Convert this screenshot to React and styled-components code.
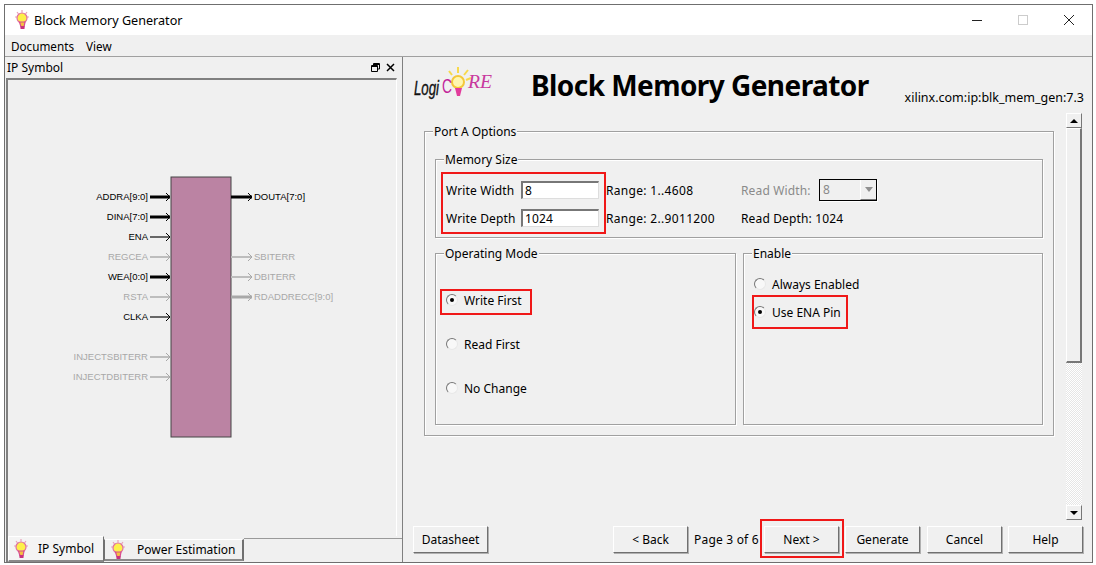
import React from 'react';
import styled, { createGlobalStyle } from 'styled-components';

const Global = createGlobalStyle`
  html, body { margin: 0; padding: 0; background: #fff; }
  body { font-family: "Noto Sans", "DejaVu Sans", sans-serif; font-size: 12px; color: #000; }
`;

const Win = styled.div`
  box-sizing: border-box;
  width: 1089px;
  height: 559px;
  margin: 4px 0 0 4px;
  border: 1px solid #6f6f6f;
  background: #f0f0f0;
  display: flex;
  flex-direction: column;
`;

const TitleBar = styled.div`
  height: 30px;
  background: #fff;
  display: flex;
  align-items: center;
  padding-left: 9px;
  font-size: 12.6px;
`;

const TitleText = styled.span`
  margin-left: 4px;
  flex: 1;
`;

const WinBtn = styled.div`
  width: 46px;
  height: 30px;
  display: flex;
  align-items: center;
  justify-content: center;
`;

const MenuBar = styled.div`
  height: 21px;
  border-bottom: 1px solid #a0a0a0;
  display: flex;
  align-items: center;
  gap: 12px;
  padding-left: 6px;
  font-size: 11.7px;
`;

const Body = styled.div`
  flex: 1;
  display: flex;
  min-height: 0;
`;

const LeftPane = styled.div`
  box-sizing: border-box;
  width: 398px;
  border-right: 1px solid #808080;
  display: flex;
  flex-direction: column;
`;

const PaneHead = styled.div`
  height: 21px;
  display: flex;
  align-items: center;
  padding: 0 7px 0 2px;
  gap: 6px;
`;

const PaneTitle = styled.span`
  flex: 1;
`;

const Canvas = styled.div`
  box-sizing: border-box;
  flex: 1;
  width: 391px;
  margin-left: 1px;
  border-top: 2px solid #808080;
  border-left: 2px solid #808080;
  border-right: 1px solid #fff;
  min-height: 0;
`;

const CanvasSvg = styled.svg`
  display: block;
  width: 389px;
  height: 455px;
`;

const TabStrip = styled.div`
  height: 26px;
  margin-left: 1px;
  display: flex;
  align-items: flex-start;
  border-left: 2px solid #808080;
`;

const Tab = styled.div`
  box-sizing: border-box;
  display: flex;
  align-items: center;
  width: ${(p) => p.$w}px;
  height: ${(p) => (p.$active ? 26 : 22)}px;
  margin-top: ${(p) => (p.$active ? 0 : 3)}px;
  padding-left: ${(p) => (p.$active ? 4 : 5)}px;
  gap: ${(p) => (p.$active ? 9 : 11)}px;
  background: ${(p) => (p.$active ? '#f4f4f4' : '#f0f0f0')};
  border-top: 1px solid #fff;
  border-left: 1px solid ${(p) => (p.$active ? '#fff' : '#707070')};
  border-right: ${(p) => (p.$active ? 1 : 2)}px solid #707070;
  border-bottom: 2px solid #8a8a8a;
`;

const TabRest = styled.div`
  flex: 1;
  margin-top: 2px;
  border-top: 1px solid #9a9a9a;
`;

const RightPane = styled.div`
  flex: 1;
  display: flex;
  flex-direction: column;
  min-width: 0;
`;

const Header = styled.div`
  height: 55px;
  display: flex;
  padding-left: 9px;
`;

const Logo = styled.svg`
  width: 84px;
  height: 38px;
  margin-top: 9px;
`;

const Heading = styled.h1`
  margin: 9px 0 0 35px;
  font: 700 28px/38px "Noto Sans", "DejaVu Sans", sans-serif;
  letter-spacing: -0.56px;
  white-space: nowrap;
`;

const Vlnv = styled.div`
  margin: 32px 0 0 auto;
  padding-right: 8px;
  font-size: 12.5px;
  line-height: 18px;
  white-space: nowrap;
`;

const Middle = styled.div`
  flex: 1;
  display: flex;
  min-height: 0;
  padding-left: 21px;
`;

const Group = styled.div`
  box-sizing: border-box;
  position: relative;
  width: ${(p) => p.$w}px;
  height: ${(p) => p.$h}px;
  border: 1px solid #a0a0a0;
  box-shadow: 1px 1px 0 #fff, inset 1px 1px 0 #fff;
`;

const Legend = styled.span`
  position: absolute;
  top: -8px;
  left: 8px;
  padding: 0 1px;
  line-height: 16px;
  background: #f0f0f0;
`;

const PortGroup = styled(Group)`
  margin-top: 19px;
  padding: 27px 10px 0;
  display: flex;
  flex-direction: column;
  gap: 15px;
`;

const SizeGroup = styled(Group)`
  display: flex;
  align-items: flex-start;
  padding: 12px 0 0 5px;
`;

const ModeRow = styled.div`
  display: flex;
  gap: 7px;
`;

const RedFrame = styled.div`
  box-sizing: border-box;
  border: 2px solid #f01818;
`;

const SizeFrame = styled(RedFrame)`
  width: 165px;
  height: 62px;
  padding: 7px 0 0 3px;
  display: flex;
  flex-direction: column;
  gap: 10px;
`;

const Field = styled.div`
  display: flex;
  align-items: center;
  height: 18px;
  white-space: nowrap;
  letter-spacing: ${(p) => p.$track || 0.15}px;
`;

const FieldLabel = styled.span`
  width: ${(p) => p.$w}px;
  color: ${(p) => (p.$off ? '#8a8a8a' : '#000')};
`;

const TextInput = styled.div`
  box-sizing: border-box;
  width: 78px;
  height: 18px;
  padding-left: 2px;
  line-height: 16px;
  background: #fff;
  border-top: 2px solid #777;
  border-left: 2px solid #777;
  border-right: 1px solid #ddd;
  border-bottom: 1px solid #ddd;
`;

const SizeColumn = styled.div`
  width: ${(p) => p.$w}px;
  padding-top: 9px;
  display: flex;
  flex-direction: column;
  gap: 10px;
`;

const Combo = styled.div`
  box-sizing: border-box;
  width: 58px;
  height: 22px;
  flex: none;
  display: flex;
  justify-content: space-between;
  color: #8a8a8a;
  line-height: 19px;
  padding-left: 3px;
  border: 1px solid #000;
  box-shadow: 1px 1px 0 #fff;
`;

const ComboArrow = styled.div`
  box-sizing: border-box;
  width: 16px;
  border-left: 1px solid #fff;
  border-bottom: 1px solid #777;
  display: flex;
  align-items: center;
  justify-content: center;
  &::after {
    content: '';
    border: 4px solid transparent;
    border-top: 5px solid #909090;
    border-bottom: 0;
  }
`;

const RadioList = styled.div`
  display: flex;
  flex-direction: column;
  align-items: flex-start;
  gap: ${(p) => p.$gap}px;
  padding: ${(p) => p.$top}px 0 0 ${(p) => p.$left}px;
`;

const RadioRow = styled.div`
  box-sizing: border-box;
  height: ${(p) => p.$h}px;
  width: ${(p) => p.$w}px;
  display: flex;
  align-items: center;
  gap: 6px;
  padding: 0 0 ${(p) => p.$lift || 0}px ${(p) => p.$pad}px;
  border: 2px solid ${(p) => (p.$marked ? '#f01818' : 'transparent')};
  white-space: nowrap;
`;

const RadioDot = styled.span`
  box-sizing: border-box;
  width: 12px;
  height: 12px;
  flex: none;
  border-radius: 50%;
  background: #f8f8f8;
  border: 1px solid;
  border-color: #777 #e8e8e8 #e8e8e8 #777;
  display: flex;
  align-items: center;
  justify-content: center;
  &::after {
    content: '';
    width: 4px;
    height: 4px;
    border-radius: 50%;
    background: ${(p) => (p.$on ? '#000' : 'transparent')};
  }
`;

const ScrollBar = styled.div`
  width: 16px;
  height: 407px;
  margin: 1px 0 0 12px;
  display: flex;
  flex-direction: column;
`;

const ScrollBtn = styled.div`
  box-sizing: border-box;
  height: 15px;
  flex: none;
  background: #f0f0f0;
  border: 1px solid;
  border-color: #fff #777 #777 #fff;
  display: flex;
  align-items: center;
  justify-content: center;
  &::after {
    content: '';
    border: 4px solid transparent;
    ${(p) => (p.$up ? 'border-bottom: 4px solid #000; border-top: 0;' : 'border-top: 4px solid #000; border-bottom: 0;')}
  }
`;

const ScrollThumb = styled.div`
  box-sizing: border-box;
  height: 235px;
  flex: none;
  border-style: solid;
  border-width: 1px 2px 2px 1px;
  border-color: #fff #777 #777 #fff;
`;

const ScrollTrack = styled.div`
  flex: 1;
  background: repeating-conic-gradient(#fff 0 25%, #e6e6e6 0 50%) 0 0 / 2px 2px;
`;

const Footer = styled.div`
  height: 43px;
  flex: none;
  box-sizing: border-box;
  padding: 7px 9px 0 10px;
  display: flex;
  align-items: flex-start;
`;

const Btn = styled.div`
  box-sizing: border-box;
  width: 75px;
  height: 27px;
  flex: none;
  display: flex;
  align-items: center;
  justify-content: center;
  background: #f0f0f0;
  border: 1px solid;
  border-color: #fff #707070 #707070 #fff;
  box-shadow: 1px 1px 0 #b0b0b0;
`;

const BackBtn = styled(Btn)`
  margin-left: auto;
`;

const PageText = styled.span`
  width: 72px;
  padding-left: 6px;
  box-sizing: border-box;
  line-height: 27px;
  letter-spacing: 0.2px;
  white-space: nowrap;
`;

const NextFrame = styled(RedFrame)`
  margin: -7px 1px 0 0;
  padding: 5px 3px 3px 2px;
`;

const GapBtn = styled(Btn)`
  margin-left: ${(p) => p.$gap}px;
`;

const Bulb = () => (
  <svg width="16" height="20" viewBox="0 0 16 20">
    <path d="M3 2 L4.5 4 M8 0 V2.5 M13 2 L11.5 4 M1 7 H3 M13 7 H15" stroke="#e8a0b8" strokeWidth="1.2" />
    <circle cx="8" cy="8" r="5" fill="#fdf04a" stroke="#e070a0" strokeWidth="1.2" />
    <path d="M5.5 12 L7 17 H10 L11 12 Z" fill="#f5c040" stroke="#d84a92" strokeWidth="1.2" />
    <rect x="6.5" y="16" width="4" height="3" fill="#c8327e" />
  </svg>
);

const pinsLeft = [
  ['ADDRA[9:0]', 197, 'bus'],
  ['DINA[7:0]', 217, 'bus'],
  ['ENA', 237, 'wire'],
  ['REGCEA', 257, 'off'],
  ['WEA[0:0]', 277, 'bus'],
  ['RSTA', 297, 'off'],
  ['CLKA', 317, 'wire'],
  ['INJECTSBITERR', 357, 'off'],
  ['INJECTDBITERR', 377, 'off'],
];

const pinsRight = [
  ['DOUTA[7:0]', 197, 'bus'],
  ['SBITERR', 257, 'off'],
  ['DBITERR', 277, 'off'],
  ['RDADDRECC[9:0]', 297, 'offbus'],
];

const wireStyle = {
  bus: { stroke: '#000', width: 3, tip: '#000' },
  wire: { stroke: '#666', width: 2, tip: '#000' },
  off: { stroke: '#bdbdbd', width: 2, tip: '#a8a8a8' },
  offbus: { stroke: '#a8a8a8', width: 3, tip: '#a8a8a8' },
};

const Pin = ({ name, y, kind, right }) => {
  const s = wireStyle[kind];
  const x1 = right ? 231 : 150;
  const x2 = right ? 252 : 170;
  const off = kind === 'off' || kind === 'offbus';
  return (
    <g>
      <line x1={x1} y1={y} x2={x2} y2={y} stroke={s.stroke} strokeWidth={s.width} />
      <path d={`M${x2 - 4} ${y - 4} L${x2} ${y} L${x2 - 4} ${y + 4}`} fill="none" stroke={s.tip} strokeWidth="1" />
      <text
        x={right ? 254 : 148}
        y={y + 3}
        textAnchor={right ? 'start' : 'end'}
        fontFamily="'Liberation Sans', sans-serif"
        fontSize="9.5"
        fill={off ? '#a8a8a8' : '#000'}
      >
        {name}
      </text>
    </g>
  );
};

const App = () => (
  <>
    <Global />
    <Win>
      <TitleBar>
        <Bulb />
        <TitleText>Block Memory Generator</TitleText>
        <WinBtn>
          <svg width="12" height="12"><line x1="1" y1="6.5" x2="11" y2="6.5" stroke="#222" /></svg>
        </WinBtn>
        <WinBtn>
          <svg width="12" height="12"><rect x="1.5" y="1.5" width="9" height="9" fill="none" stroke="#ccc" /></svg>
        </WinBtn>
        <WinBtn>
          <svg width="12" height="12"><path d="M1 1 L11 11 M11 1 L1 11" stroke="#222" /></svg>
        </WinBtn>
      </TitleBar>
      <MenuBar>
        <span>Documents</span>
        <span>View</span>
      </MenuBar>
      <Body>
        <LeftPane>
          <PaneHead>
            <PaneTitle>IP Symbol</PaneTitle>
            <svg width="9" height="9" viewBox="0 0 9 9">
              <path d="M2.5 2.5 V0.5 H8.5 V6 H6.5 M0.5 2.5 H6.5 V8.5 H0.5 Z M0.5 3.5 H6.5 M2.5 1.5 H8.5" fill="none" stroke="#000" />
            </svg>
            <svg width="9" height="9" viewBox="0 0 9 9">
              <path d="M1 1 L8 8 M8 1 L1 8" stroke="#000" strokeWidth="1.5" />
            </svg>
          </PaneHead>
          <Canvas>
            <CanvasSvg viewBox="8 80 389 455">
              <rect x="171" y="177" width="60" height="260" fill="#bb83a3" stroke="#444" strokeWidth="1" />
              {pinsLeft.map(([n, y, k]) => <Pin key={n} name={n} y={y} kind={k} />)}
              {pinsRight.map(([n, y, k]) => <Pin key={n} name={n} y={y} kind={k} right />)}
            </CanvasSvg>
          </Canvas>
          <TabStrip>
            <Tab $active $w={96}><Bulb />IP Symbol</Tab>
            <Tab $w={140}><Bulb />Power Estimation</Tab>
            <TabRest />
          </TabStrip>
        </LeftPane>
        <RightPane>
          <Header>
            <Logo viewBox="0 0 84 38">
              <g stroke="#f7d94c" strokeWidth="2">
                <line x1="40" y1="9" x2="37" y2="5" />
                <line x1="46" y1="7" x2="46" y2="1" />
                <line x1="52" y1="9" x2="56" y2="4" />
                <line x1="54" y1="14" x2="59" y2="12" />
              </g>
              <circle cx="46" cy="16" r="6" fill="#fff7b0" stroke="#f4c83a" strokeWidth="2" />
              <path d="M43 22 L45 30 H48 L50 22 Z" fill="#e23c9c" />
              <text x="2" y="29" fontFamily="'Liberation Sans', sans-serif" fontStyle="italic" fontSize="20" textLength="25" lengthAdjust="spacingAndGlyphs" fill="#111" stroke="#111" strokeWidth="0.4">Logi</text>
              <text x="30" y="27" fontFamily="'Liberation Sans', sans-serif" fontSize="20" textLength="10" lengthAdjust="spacingAndGlyphs" fill="#c2249a">C</text>
              <text x="56" y="22" fontFamily="'Liberation Serif', serif" fontStyle="italic" fontSize="19" textLength="24" lengthAdjust="spacingAndGlyphs" fill="#c8389e">RE</text>
            </Logo>
            <Heading>Block Memory Generator</Heading>
            <Vlnv>xilinx.com:ip:blk_mem_gen:7.3</Vlnv>
          </Header>
          <Middle>
            <PortGroup $w={630} $h={305}>
              <Legend>Port A Options</Legend>
              <SizeGroup $w={608} $h={79}>
                <Legend>Memory Size</Legend>
                <SizeFrame>
                  <Field><FieldLabel $w={75}>Write Width</FieldLabel><TextInput>8</TextInput></Field>
                  <Field><FieldLabel $w={75}>Write Depth</FieldLabel><TextInput>1024</TextInput></Field>
                </SizeFrame>
                <SizeColumn $w={135}>
                  <Field $track={0.32}>Range: 1..4608</Field>
                  <Field $track={0.32}>Range: 2..9011200</Field>
                </SizeColumn>
                <SizeColumn $w={200}>
                  <Field>
                    <FieldLabel $w={78} $off>Read Width:</FieldLabel>
                    <Combo>8<ComboArrow /></Combo>
                  </Field>
                  <Field>Read Depth: 1024</Field>
                </SizeColumn>
              </SizeGroup>
              <ModeRow>
                <Group $w={301} $h={172}>
                  <Legend>Operating Mode</Legend>
                  <RadioList $gap={18} $top={35} $left={4}>
                    <RadioRow $marked $lift={4} $h={26} $w={92} $pad={4}><RadioDot $on />Write First</RadioRow>
                    <RadioRow $lift={4} $h={26} $w={92} $pad={4}><RadioDot />Read First</RadioRow>
                    <RadioRow $lift={4} $h={26} $w={92} $pad={4}><RadioDot />No Change</RadioRow>
                  </RadioList>
                </Group>
                <Group $w={300} $h={172}>
                  <Legend>Enable</Legend>
                  <RadioList $gap={0} $top={19} $left={8}>
                    <RadioRow $h={22} $w={120} $pad={0}><RadioDot />Always Enabled</RadioRow>
                    <RadioRow $marked $h={34} $w={96} $pad={0}><RadioDot $on />Use ENA Pin</RadioRow>
                  </RadioList>
                </Group>
              </ModeRow>
            </PortGroup>
            <ScrollBar>
              <ScrollBtn $up />
              <ScrollThumb />
              <ScrollTrack />
              <ScrollBtn />
            </ScrollBar>
          </Middle>
          <Footer>
            <Btn>Datasheet</Btn>
            <BackBtn>&lt; Back</BackBtn>
            <PageText>Page 3 of 6</PageText>
            <NextFrame><Btn>Next &gt;</Btn></NextFrame>
            <Btn>Generate</Btn>
            <GapBtn $gap={7}>Cancel</GapBtn>
            <GapBtn $gap={6}>Help</GapBtn>
          </Footer>
        </RightPane>
      </Body>
    </Win>
  </>
);

export default App;
